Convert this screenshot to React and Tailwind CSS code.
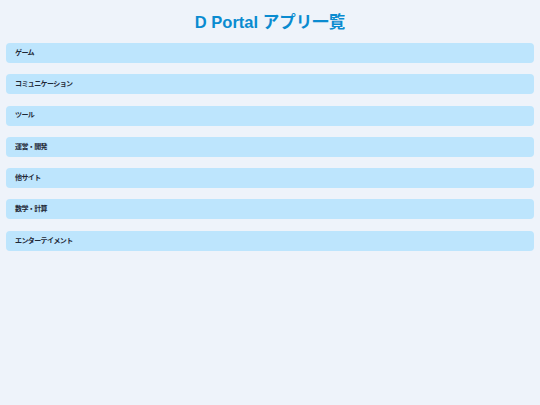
import React from "react";

const categories = [
  "ゲーム",
  "コミュニケーション",
  "ツール",
  "運営・開発",
  "他サイト",
  "数学・計算",
  "エンターテイメント",
];

const App = () => {
  return (
    <div
      className="min-h-screen bg-[#eef3fa] px-[6px]"
      style={{ fontFamily: '"Liberation Sans", "Noto Sans CJK JP", sans-serif' }}
    >
      <h1 className="pt-[10px] h-[43px] text-center text-[16.5px] leading-[24px] font-bold text-[#0a8bd0]">
        D Portal アプリ一覧
      </h1>
      <div className="flex flex-col gap-[11.3px]">
        {categories.map((name) => (
          <div
            key={name}
            className="h-[20px] flex items-center px-[9px] rounded-[4px] bg-[#bde5fd] text-[7px] tracking-[-0.6px] font-bold text-[#1f2937]"
          >
            {name}
          </div>
        ))}
      </div>
    </div>
  );
};

export default App;
